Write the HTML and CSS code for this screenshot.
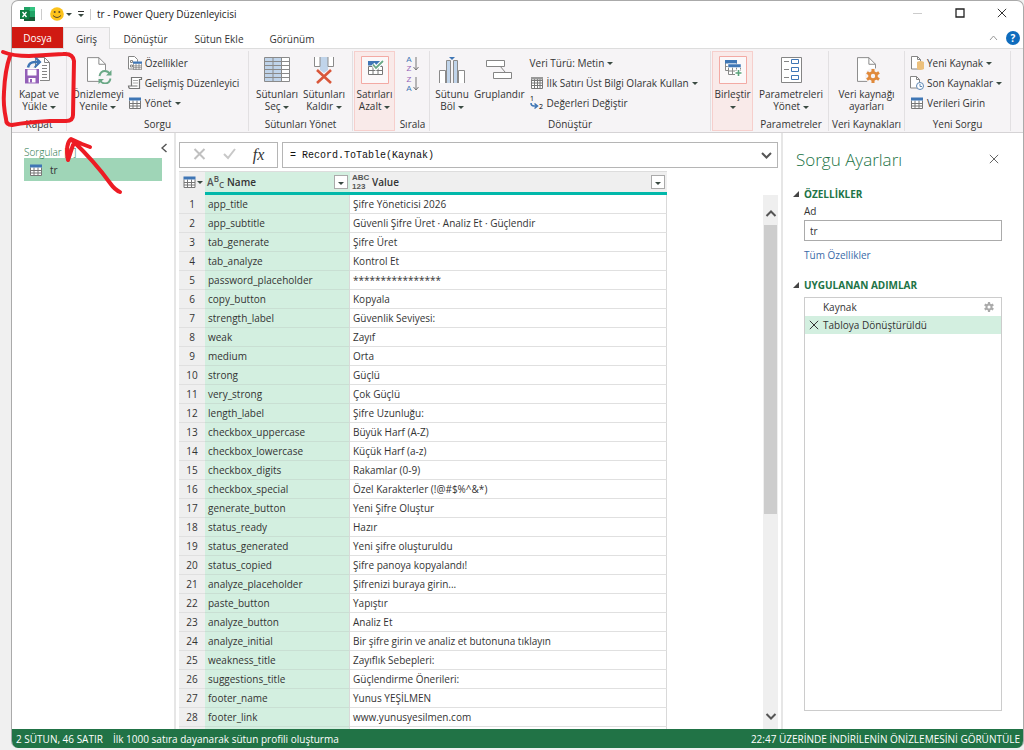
FILE: index.html
```html
<!doctype html>
<html lang="tr">
<head>
    <meta charset="UTF-8">
    <title>tr - Power Query Düzenleyicisi</title>
    <link rel="stylesheet" href="styles.css">
</head>
<body>
<svg class="defs" aria-hidden="true">
    <symbol id="i-table" viewBox="0 0 12 12">
        <path fill="#fff" d="M.5 1h11v10.500H.5z"/>
        <path fill="none" stroke="#777" d="M.5 3.500v8h11v-8M.5 6.500h11M.5 9h11M4 3.500v8M8 3.500v8"/>
        <path fill="#3f76b5" d="M0 .5h12v3H0z"/>
    </symbol>
    <symbol id="i-page" viewBox="0 0 20 26">
        <path fill="#fff" stroke="#858585" d="M.5.5h12l7 7v18H.5z"/>
        <path fill="none" stroke="#858585" d="M12.500.5v7h7"/>
    </symbol>
    <symbol id="i-x" viewBox="0 0 12 12">
        <path fill="none" stroke="currentColor" stroke-width="1.200" d="M1 1l10 10M11 1L1 11"/>
    </symbol>
    <symbol id="i-gear" viewBox="0 0 16 16">
        <path fill="none" stroke="currentColor" stroke-width="3.500" d="M8 0v4M8 12v4M1.100 4l3.400 2M11.500 10l3.400 2M1.100 12l3.400-2M11.500 6l3.400-2"/>
        <circle cx="8" cy="8" r="4" fill="none" stroke="currentColor" stroke-width="3"/>
    </symbol>
</svg>

<div class="window">
    <header class="titlebar">
        <svg class="logo" viewBox="0 0 15 14">
            <path fill="#21a366" d="M4 0h11v14H4z"/>
            <path fill="#107c41" d="M4 4h6v6H4z"/>
            <path fill="#33c481" d="M10 0h5v4h-5z"/>
            <path fill="#185c37" d="M4 10h11v4H4z"/>
            <path fill="#107c41" d="M0 3h9v9H0z"/>
            <path stroke="#fff" stroke-width="1.300" d="M2.500 5l4 5M6.500 5l-4 5"/>
        </svg>
        <span class="bar"></span>
        <button class="quick" aria-label="Geri bildirim">
            <svg width="14" height="14" viewBox="0 0 14 14"><circle cx="7" cy="7" r="6.800" fill="#fcc21b"/><circle cx="4.700" cy="5" r="1" fill="#5b4a2a"/><circle cx="9.300" cy="5" r="1" fill="#5b4a2a"/><path d="M3 8.500q4 4 8 0" fill="none" stroke="#5b4a2a"/></svg>
            <i class="caret"></i>
        </button>
        <button class="quick more" aria-label="Özelleştir"><i class="caret"></i></button>
        <span class="bar"></span>
        <h1>tr - Power Query Düzenleyicisi</h1>
        <div class="winbtns">
            <button aria-label="Simge durumuna küçült"><svg width="10" height="10"><path d="M0 5.500h9" stroke="#ccc"/></svg></button>
            <button aria-label="Ekranı kapla"><svg width="10" height="10"><path d="M1 1h8v8H1z" fill="none" stroke="#222" stroke-width="1.300"/></svg></button>
            <button aria-label="Kapat"><svg width="10" height="10" viewBox="0 0 12 12"><use href="#i-x"/></svg></button>
        </div>
    </header>

    <nav class="tabs">
        <button class="file">Dosya</button>
        <button class="cur">Giriş</button>
        <button class="t-transform">Dönüştür</button>
        <button class="t-add">Sütun Ekle</button>
        <button class="t-view">Görünüm</button>
        <div class="help">
            <svg width="9" height="6"><path d="M1 5l3.500-4L8 5" fill="none" stroke="#999"/></svg>
            <button aria-label="Yardım">?</button>
        </div>
    </nav>

    <div class="ribbon">
        <section class="group g-close">
            <div class="tools">
                <button class="big">
                    <svg viewBox="0 0 28 28">
                        <g fill="none" stroke="#858585"><path fill="#fff" d="M10.500 1.500h9l5 5v18h-14z"/><path d="M19.500 1.500v5h5M17 9.500h5M17 12.500h5M17 15.500h5M17 18.500h5M17 21.500h5"/></g>
                        <path fill="#fff" d="M0 12h15v16H0z"/>
                        <path fill="#9460b8" d="M0 13h14v14.500H0z"/>
                        <path fill="#fff" d="M2.500 13.500h9v6h-9zM3.500 22h7v4.500h-7z"/>
                        <path fill="#9460b8" d="M5 23h2v3.500H5z"/>
                        <path fill="none" stroke="#3f76b5" stroke-width="2.600" d="M3 11.500Q4 6 10 6h4"/>
                        <path fill="#3f76b5" d="M11 .5l5.500 5.500-5.500 5.500H8.500L13 6 8.500.5z"/>
                    </svg>
                    <span>Kapat ve<br>Yükle <i class="caret"></i></span>
                </button>
            </div>
            <h2>Kapat</h2>
        </section>
        <section class="group g-query">
            <div class="tools">
                <button class="big">
                    <svg viewBox="0 0 28 28">
                        <use href="#i-page" x="3" y="1" width="19" height="25"/>
                        <circle cx="21" cy="21" r="7" fill="#f6f4f6"/>
                        <path d="M15.500 20q1-5 5.500-5 3 0 5 3M26.500 22.500q-1 5-5.500 5-3 0-5-3" fill="none" stroke="#6aa886" stroke-width="1.800"/>
                        <path d="M27.500 14v5.500H22zM14.500 28v-5H20z" fill="#6aa886"/>
                    </svg>
                    <span>Önizlemeyi<br>Yenile <i class="caret"></i></span>
                </button>
                <div class="rows">
                    <button><svg viewBox="0 0 14 14"><path d="M.5.5h6l3 3V13h-9z" fill="#fff" stroke="#858585"/><path d="M2.500 4.500h2v2h-2zM2.500 9h2v2h-2z" fill="none" stroke="#858585"/><use href="#i-table" x="5" y="5" width="9" height="9"/></svg>Özellikler</button>
                    <button><svg viewBox="0 0 14 14"><path d="M3.500 10V1.500h10v2h-2v9h-9q-2 0-2-2.500h9" fill="#fff" stroke="#777" stroke-width="1.200"/><path d="M5 4.500h5M5 7h5" stroke="#aaa"/></svg>Gelişmiş Düzenleyici</button>
                    <button><svg viewBox="0 0 14 14"><use href="#i-table" x="1" y="1" width="12" height="12"/></svg>Yönet <i class="caret"></i></button>
                </div>
            </div>
            <h2>Sorgu</h2>
        </section>
        <section class="group g-cols">
            <div class="tools">
                <button class="big">
                    <svg viewBox="0 0 28 28"><path fill="#fff" d="M1.500 1.500h25v24h-25z"/><path fill="#c0d4ea" d="M1.500 1.500h17v24h-17z"/><path fill="none" stroke="#8a8a8a" d="M1.500 1.500h25v24h-25zM10 1.500v24M18.500 1.500v24M1.500 5.500h25M1.500 9.500h25M1.500 13.500h25M1.500 17.500h25M1.500 21.500h25"/></svg>
                    <span>Sütunları<br>Seç <i class="caret"></i></span>
                </button>
                <button class="big">
                    <svg viewBox="0 0 28 28"><path fill="#c0d4ea" d="M10 1h8v13l-4 3-4-3z"/><path fill="#fff" stroke="#8a8a8a" d="M4.500 1v9.500H10V1M23.500 1v9.500H18V1"/><path stroke="#d9573a" stroke-width="2.600" d="M7 14l14 13M21 14L7 27"/></svg>
                    <span>Sütunları<br>Kaldır <i class="caret"></i></span>
                </button>
            </div>
            <h2>Sütunları Yönet</h2>
        </section>
        <section class="group g-boxed">
            <button class="big">
                <svg viewBox="0 0 28 28"><path class="frame" d="M.5.5h27v27H.5z"/><path fill="#fff" stroke="#777" d="M7.500 10.500h14v8h-14zM7.500 14.500h14M12 10.500v8M17 10.500v8"/><path fill="#3f76b5" d="M7 5h14v4.500H7z"/><path fill="none" stroke="#fff" stroke-width="4" d="M12 8l3 4 7-7"/><path fill="none" stroke="#6aa886" stroke-width="1.800" d="M12 8.500l3 3.500 7-7"/></svg>
                <span>Satırları<br>Azalt <i class="caret"></i></span>
            </button>
        </section>
        <section class="group g-sort">
            <div class="tools">
                <button aria-label="Artan sırala"><span class="az"><b>A</b><em>Z</em></span><svg width="6" height="14"><path d="M3 0v13M.5 10L3 13l2.500-3" fill="none" stroke="#777"/></svg></button>
                <button aria-label="Azalan sırala"><span class="az"><em>Z</em><b>A</b></span><svg width="6" height="14"><path d="M3 0v13M.5 10L3 13l2.500-3" fill="none" stroke="#777"/></svg></button>
            </div>
            <h2>Sırala</h2>
        </section>
        <section class="group g-transform">
            <div class="tools">
                <button class="big">
                    <svg viewBox="0 0 28 28"><path fill="#fff" stroke="#8a8a8a" d="M1.500 27V14.500h6V27M20.500 27V14.500h6V27"/><path fill="#c0d4ea" d="M9 4h3v23H9zM16 4h3v23h-3z"/><path fill="none" stroke="#8a8a8a" d="M8.500 27V4.500h4V27M15.500 27V4.500h4V27"/><path fill="#3f76b5" d="M11 1h6l-3 3z"/></svg>
                    <span>Sütunu<br>Böl <i class="caret"></i></span>
                </button>
                <button class="big">
                    <svg viewBox="0 0 28 28"><path fill="none" stroke="#858585" d="M15 10l5 6"/><path fill="#fff" stroke="#858585" d="M1.500 4.500h18v6h-18zM8.500 16.500h18v6h-18z"/></svg>
                    <span>Gruplandır</span>
                </button>
                <div class="rows">
                    <button>Veri Türü: Metin <i class="caret"></i></button>
                    <button><svg viewBox="0 0 14 14"><path fill="#fff" stroke="#777" d="M1.500 1.500h11v11h-11zM1.500 4.500h11M1.500 7h11M1.500 9.500h11M4.500 1.500v11M7.500 1.500v11M10 1.500v11"/><path fill="#999" d="M1 1h12v2.500H1z"/></svg>İlk Satırı Üst Bilgi Olarak Kullan <i class="caret"></i></button>
                    <button><svg viewBox="0 0 14 14"><text x="0" y="5">1</text><text x="9" y="13">2</text><path fill="none" stroke="#3f76b5" stroke-width="1.500" d="M1 7q0 3 3 3h3M4.500 7.500L7.500 10l-3 2.500"/></svg>Değerleri Değiştir</button>
                </div>
            </div>
            <h2>Dönüştür</h2>
        </section>
        <section class="group g-boxed">
            <button class="big">
                <svg viewBox="0 0 28 28"><path class="frame" d="M.5.5h27v27H.5z"/><path fill="#fff" stroke="#888" d="M6.500 5.500h11v9h-11zM6.500 10.500h11"/><path fill="#3f76b5" d="M6 4h12v3.500H6z"/><path fill="#fff" stroke="#888" d="M9.500 9.500h12v9h-12zM9.500 15h12M13.500 11v7.500M17.500 11v7.500"/><path fill="#3f76b5" stroke="#fff" stroke-width=".5" d="M9 8h13v3.500H9z"/><path stroke="#fff" stroke-width="4" d="M19.500 13v8M16 17h7"/><path stroke="#5aa17a" stroke-width="1.600" d="M19.500 14v6M16.500 17h6"/></svg>
                <span>Birleştir<br><i class="caret"></i></span>
            </button>
        </section>
        <section class="group g-params">
            <div class="tools">
                <button class="big">
                    <svg viewBox="0 0 28 28"><path fill="#fff" stroke="#858585" d="M4.500 1.500h20v25h-20z"/><path stroke="#858585" d="M7 5.500h5M7 13.500h5M7 21.500h5"/><path fill="none" stroke="#3f76b5" d="M14.500 3.500h7v4h-7zM14.500 11.500h7v4h-7zM14.500 19.500h7v4h-7z"/></svg>
                    <span>Parametreleri<br>Yönet <i class="caret"></i></span>
                </button>
            </div>
            <h2>Parametreler</h2>
        </section>
        <section class="group g-source">
            <div class="tools">
                <button class="big">
                    <svg viewBox="0 0 28 28"><use href="#i-page" x="4" y="1" width="19" height="25"/><circle cx="20" cy="20" r="8" fill="#f6f4f6"/><use href="#i-gear" x="13" y="13" width="14" height="14" color="#e08a3c"/></svg>
                    <span>Veri kaynağı<br>ayarları</span>
                </button>
            </div>
            <h2>Veri Kaynakları</h2>
        </section>
        <section class="group g-new">
            <div class="tools">
                <div class="rows">
                    <button><svg viewBox="0 0 14 14"><path d="M1.500.5h6l3 3V13h-9z" fill="#fff" stroke="#858585"/><path d="M7.500.5v3h3" fill="none" stroke="#858585"/><path fill="#ecc07c" d="M7 6q3.500-2 7 0v7q-3.500 2-7 0z"/></svg>Yeni Kaynak <i class="caret"></i></button>
                    <button><svg viewBox="0 0 14 14"><path d="M.5.5h6l3 3V12h-9z" fill="#fff" stroke="#858585"/><path d="M6.500.5v3h3" fill="none" stroke="#858585"/><circle cx="10" cy="10" r="3.500" fill="#fff" stroke="#5d87b5"/><path d="M10 8v2.500h2" fill="none" stroke="#5d87b5"/></svg>Son Kaynaklar <i class="caret"></i></button>
                    <button><svg viewBox="0 0 14 14"><use href="#i-table" x="1" y="1" width="12" height="12"/></svg>Verileri Girin</button>
                </div>
            </div>
            <h2>Yeni Sorgu</h2>
        </section>
    </div>

    <main>
        <aside class="queries">
            <div class="head"><h2>Sorgular [1]</h2><button aria-label="Daralt"><svg width="6" height="10"><path d="M5.500 1L1 5l4.500 4" fill="none" stroke="#555" stroke-width="1.500"/></svg></button></div>
            <button class="query"><svg width="12" height="12"><use href="#i-table"/></svg>tr</button>
        </aside>

        <div class="center">
            <div class="formula">
                <div class="actions">
                    <button aria-label="İptal"><svg width="13" height="12" viewBox="0 0 12 12" color="#c0c0c0" stroke-width="2"><path fill="none" stroke="currentColor" d="M1 1l10 10M11 1L1 11"/></svg></button>
                    <button aria-label="Onayla"><svg width="13" height="12"><path d="M1 6l4 4 7-9" fill="none" stroke="#c8c8c8" stroke-width="2"/></svg></button>
                    <button class="fx">fx</button>
                </div>
                <div class="input">
                    <input aria-label="Formül" value="= Record.ToTable(Kaynak)">
                    <button aria-label="Genişlet"><svg width="11" height="7"><path d="M1 1l4.500 4.500L10 1" fill="none" stroke="#555" stroke-width="2"/></svg></button>
                </div>
            </div>
            <div class="data">
                <table>
                    <thead>
                    <tr>
                        <th class="corner"><div><svg width="13" height="12"><use href="#i-table"/></svg><i class="caret"></i></div></th>
                        <th class="name"><div><span class="abc">A<sup>B</sup><sub>C</sub></span>Name<button aria-label="Filtre"><i class="caret"></i></button></div></th>
                        <th class="value"><div><span class="any">ABC<br>123</span>Value<button aria-label="Filtre"><i class="caret"></i></button></div></th>
                    </tr>
                    </thead>
                    <tbody>
                    <tr><th>1</th><td>app_title</td><td>Şifre Yöneticisi 2026</td></tr>
                    <tr><th>2</th><td>app_subtitle</td><td>Güvenli Şifre Üret · Analiz Et · Güçlendir</td></tr>
                    <tr><th>3</th><td>tab_generate</td><td>Şifre Üret</td></tr>
                    <tr><th>4</th><td>tab_analyze</td><td>Kontrol Et</td></tr>
                    <tr><th>5</th><td>password_placeholder</td><td>****************</td></tr>
                    <tr><th>6</th><td>copy_button</td><td>Kopyala</td></tr>
                    <tr><th>7</th><td>strength_label</td><td>Güvenlik Seviyesi:</td></tr>
                    <tr><th>8</th><td>weak</td><td>Zayıf</td></tr>
                    <tr><th>9</th><td>medium</td><td>Orta</td></tr>
                    <tr><th>10</th><td>strong</td><td>Güçlü</td></tr>
                    <tr><th>11</th><td>very_strong</td><td>Çok Güçlü</td></tr>
                    <tr><th>12</th><td>length_label</td><td>Şifre Uzunluğu:</td></tr>
                    <tr><th>13</th><td>checkbox_uppercase</td><td>Büyük Harf (A-Z)</td></tr>
                    <tr><th>14</th><td>checkbox_lowercase</td><td>Küçük Harf (a-z)</td></tr>
                    <tr><th>15</th><td>checkbox_digits</td><td>Rakamlar (0-9)</td></tr>
                    <tr><th>16</th><td>checkbox_special</td><td>Özel Karakterler (!@#$%^&amp;*)</td></tr>
                    <tr><th>17</th><td>generate_button</td><td>Yeni Şifre Oluştur</td></tr>
                    <tr><th>18</th><td>status_ready</td><td>Hazır</td></tr>
                    <tr><th>19</th><td>status_generated</td><td>Yeni şifre oluşturuldu</td></tr>
                    <tr><th>20</th><td>status_copied</td><td>Şifre panoya kopyalandı!</td></tr>
                    <tr><th>21</th><td>analyze_placeholder</td><td>Şifrenizi buraya girin...</td></tr>
                    <tr><th>22</th><td>paste_button</td><td>Yapıştır</td></tr>
                    <tr><th>23</th><td>analyze_button</td><td>Analiz Et</td></tr>
                    <tr><th>24</th><td>analyze_initial</td><td>Bir şifre girin ve analiz et butonuna tıklayın</td></tr>
                    <tr><th>25</th><td>weakness_title</td><td>Zayıflık Sebepleri:</td></tr>
                    <tr><th>26</th><td>suggestions_title</td><td>Güçlendirme Önerileri:</td></tr>
                    <tr><th>27</th><td>footer_name</td><td>Yunus YEŞİLMEN</td></tr>
                    <tr><th>28</th><td>footer_link</td><td>www.yunusyesilmen.com</td></tr>
                    <tr><th></th><td></td><td></td></tr>
                    </tbody>
                </table>
                <div class="scroll">
                    <button aria-label="Yukarı"><svg width="12" height="8"><path d="M1.500 7L6 2.500 10.500 7" fill="none" stroke="#555" stroke-width="2"/></svg></button>
                    <div class="track"><div class="thumb"></div></div>
                    <button aria-label="Aşağı"><svg width="12" height="8"><path d="M1.500 1L6 5.500 10.500 1" fill="none" stroke="#555" stroke-width="2"/></svg></button>
                </div>
            </div>
        </div>

        <aside class="settings">
            <div class="head"><h2>Sorgu Ayarları</h2><button aria-label="Bölmeyi kapat"><svg width="10" height="10"><use href="#i-x"/></svg></button></div>
            <h3>ÖZELLİKLER</h3>
            <div class="props">
                <label for="qname">Ad</label>
                <input id="qname" value="tr">
                <a href="#">Tüm Özellikler</a>
            </div>
            <h3>UYGULANAN ADIMLAR</h3>
            <ul class="steps">
                <li>Kaynak<svg class="gear" width="10" height="10"><use href="#i-gear"/></svg></li>
                <li class="cur"><svg width="10" height="10"><use href="#i-x"/></svg>Tabloya Dönüştürüldü</li>
            </ul>
        </aside>
    </main>

    <footer>
        <span>2 SÜTUN, 46 SATIR</span>
        <span>İlk 1000 satıra dayanarak sütun profili oluşturma</span>
        <span class="right">22:47 ÜZERİNDE İNDİRİLENİN ÖNİZLEMESİNİ GÖRÜNTÜLE</span>
    </footer>
</div>

<svg class="marker" width="130" height="200" viewBox="0 0 130 200" aria-hidden="true">
    <path d="M3 52q10 4 26 4l34-2q10-1 11 7l-1 54q0 6-7 6H50q-22 1-38 4-6 0-6-6Q3 105 4 92q1-22 6-36"/>
    <path d="M120 192q-5-2-10-9Q95 162 72 140M68 160q-3-16 3-21l11 5 8 3M68 160l5-15"/>
</svg>
</body>
</html>
```
FILE: styles.css
```css
*{
    margin: 0;
    padding: 0;
    box-sizing: border-box;
    list-style: none;
}
body{
    height: 100vh;
    padding: 0 0 2px 11px;
    overflow: hidden;
    background: #f0f0f0;
    font: 10px/12px "Open Sans", "Noto Sans", sans-serif;
    color: #333;
}
button, input{
    font: inherit;
    color: inherit;
    background: none;
    border: 0;
    white-space: nowrap;
}
h1, h2, h3{
    font-size: inherit;
    font-weight: normal;
}
.defs{
    position: absolute;
    width: 0;
    height: 0;
}
.window{
    height: 100%;
    display: flex;
    flex-direction: column;
    background: #fff;
    border: 1px solid #aaa;
    border-bottom: 0;
    border-radius: 7px;
    overflow: hidden;
}
.caret{
    display: inline-block;
    vertical-align: middle;
    border: 3px solid transparent;
    border-top-color: #3a4a42;
    border-bottom: 0;
}

/* title bar */
.titlebar{
    height: 26px;
    flex: none;
    display: flex;
    align-items: center;
    padding-left: 8px;
}
.titlebar h1{
    color: #222;
}
.logo{
    width: 15px;
    height: 14px;
}
.bar{
    width: 1px;
    height: 11px;
    margin: 0 6px;
    background: #ccc;
}
.quick{
    display: flex;
    align-items: center;
    gap: 2px;
    margin-left: 2px;
}
.quick.more{
    margin-left: 6px;
    padding-top: 2px;
    border-top: 1px solid #333;
}
.winbtns{
    margin-left: auto;
    display: flex;
}
.winbtns button{
    width: 42px;
    height: 26px;
}

/* ribbon tabs */
.tabs{
    height: 22px;
    flex: none;
    display: flex;
    border-bottom: 1px solid #ddd;
}
.tabs button{
    width: 76px;
    height: 22px;
    padding-top: 1px;
}
.tabs .file{
    width: 51px;
    height: 21px;
    color: #fff;
    background: #d01a12;
}
.tabs .cur{
    width: 47px;
    background: #f6f4f6;
    border: 1px solid #ddd;
    border-bottom: 0;
}
.tabs .t-transform{
    width: 71px;
}
.tabs .t-view{
    width: 70px;
}
.help{
    margin-left: auto;
    padding-right: 3px;
    display: flex;
    align-items: center;
    gap: 8px;
}
.tabs .help button{
    width: 14px;
    height: 14px;
    padding: 0;
    border-radius: 50%;
    background: #0f6cbd;
    color: #fff;
    font-weight: bold;
}

/* ribbon */
.ribbon{
    height: 84px;
    flex: none;
    display: flex;
    padding: 2px 0 1px;
    background: #f6f4f6;
    border-bottom: 1px solid #d5d3d5;
    overflow: hidden;
}
.group{
    flex: none;
    display: flex;
    flex-direction: column;
    border-right: 1px solid #e2e0e2;
}
.group h2{
    height: 13px;
    margin-top: auto;
    text-align: center;
    white-space: nowrap;
}
.tools{
    display: flex;
    justify-content: center;
}
.big{
    padding-top: 5px;
    display: flex;
    flex-direction: column;
    align-items: center;
    min-width: 47px;
}
.big svg{
    width: 28px;
    height: 28px;
    margin-bottom: 4px;
}
.rows{
    display: flex;
    flex-direction: column;
    align-items: flex-start;
    padding-top: 2px;
}
.rows button{
    height: 20px;
    display: flex;
    align-items: center;
    gap: 3px;
}
.rows svg{
    width: 14px;
    height: 14px;
    overflow: visible;
}
.rows text{
    font-size: 7px;
}
.g-close{
    width: 55px;
}
.g-query{
    width: 182px;
}
.g-query .tools{
    justify-content: flex-start;
    gap: 4px;
    padding-left: 5px;
}
.g-cols{
    width: 104px;
}
.g-boxed{
    width: 41px;
    margin: 0 1px;
    align-items: center;
    background: #f9eae9;
    border: 1px solid #f6cfcc;
}
.g-boxed .big{
    padding-top: 4px;
}
.frame{
    fill: #fbf8f9;
    stroke: #f3aaa4;
}
.g-sort{
    width: 34px;
}
.g-sort .tools{
    flex-direction: column;
    align-items: center;
    gap: 2px;
    padding-top: 4px;
}
.g-sort button{
    display: flex;
    align-items: center;
    gap: 1px;
}
.az{
    font: 8px/9px "Liberation Sans", sans-serif;
}
.az b, .az em{
    display: block;
    font-style: normal;
    font-weight: normal;
    color: #3f76b5;
}
.az em{
    color: #9460b8;
}
.g-transform{
    width: 281px;
}
.g-transform .tools{
    justify-content: flex-start;
}
.g-transform .big{
    min-width: 44px;
}
.g-transform .rows{
    padding-left: 5px;
}
.g-params{
    width: 75px;
}
.g-source{
    width: 76px;
}
.g-new{
    width: 106px;
}
.g-new .tools{
    justify-content: flex-start;
    padding-left: 5px;
}

/* body */
main{
    flex: 1;
    min-height: 0;
    display: flex;
}
.queries{
    width: 164px;
    border-right: 2px solid #e6e6e6;
    padding: 10px 12px 0 12px;
}
.queries .head{
    display: flex;
    justify-content: space-between;
    height: 15px;
}
.queries .head h2{
    padding-top: 3px;
    font-weight: 300;
    color: #217346;
}
.queries .head button{
    height: 12px;
    margin-right: -5px;
}
.query{
    width: 100%;
    height: 23px;
    padding-left: 6px;
    display: flex;
    align-items: center;
    gap: 8px;
    background: #9fd5b7;
}
.center{
    flex: 1;
    min-width: 0;
    display: flex;
    flex-direction: column;
    padding: 9px 3px 0 3px;
}
.formula{
    display: flex;
    gap: 4px;
    height: 26px;
    margin-bottom: 3px;
}
.actions, .input{
    display: flex;
    align-items: center;
    border: 1px solid #b5b5b5;
}
.actions{
    width: 99px;
    justify-content: space-around;
    padding: 0 4px;
}
.fx{
    font: italic 16px/16px "Liberation Serif", serif;
}
.input{
    flex: 1;
    padding: 0 5px 0 7px;
}
.input input{
    flex: 1;
    min-width: 0;
    font: 10px "Liberation Mono", monospace;
    color: #111;
}
.input svg{
    display: block;
}
.data{
    flex: 1;
    min-height: 0;
    display: flex;
    justify-content: space-between;
    align-items: flex-start;
    overflow: hidden;
}
table{
    border-collapse: separate;
    border-spacing: 0;
    table-layout: fixed;
    width: 488px;
}
thead th{
    height: 24px;
    background: #efefef;
    border-top: 1px solid #ddd;
    border-bottom: 3px solid #01b8aa;
    font-weight: 600;
    text-align: left;
}
thead div{
    display: flex;
    align-items: center;
    padding: 0 2px;
}
thead th.corner{
    width: 26px;
    border-bottom-color: #efefef;
}
.corner div{
    padding-left: 4px;
    gap: 1px;
}
thead th.name{
    width: 145px;
    background: #d3efe0;
}
.abc, .any{
    width: 20px;
    flex: none;
    font-weight: 600;
    color: #555;
}
.abc{
    display: flex;
    align-items: center;
}
.abc sup, .abc sub{
    font-size: 8px;
    line-height: 8px;
}
.abc sup{
    padding-bottom: 6px;
}
.abc sub{
    padding-top: 6px;
}
.any{
    font: bold 8px/9px "Liberation Sans", sans-serif;
}
thead button{
    width: 14px;
    height: 14px;
    margin-left: auto;
    line-height: 8px;
    background: #fff;
    border: 1px solid #aaa;
}
tbody th, tbody td{
    height: 19px;
    border-bottom: 1px solid #e0e0e0;
    white-space: nowrap;
}
tbody th{
    background: #efefef;
    font-weight: normal;
}
tbody td{
    padding-left: 3px;
    border-right: 1px solid #d9d9d9;
}
tbody td:nth-child(2){
    background: #d3efe0;
    border-bottom-color: #c9dfd3;
}
.scroll{
    width: 15px;
    align-self: stretch;
    margin-top: 24px;
    display: flex;
    flex-direction: column;
    background: #efefef;
}
.scroll button{
    height: 30px;
    padding-top: 6px;
    flex: none;
}
.scroll .track{
    flex: 1;
    padding: 0 1px;
}
.scroll .thumb{
    height: 61%;
    background: #cdcdcd;
}
.settings{
    width: 242px;
    border-left: 2px solid #e6e6e6;
    padding: 15px 21px 18px 10px;
    display: flex;
    flex-direction: column;
}
.settings .head{
    display: flex;
    justify-content: space-between;
    align-items: center;
    padding: 0 3px;
    height: 24px;
    color: #666;
}
.settings .head h2{
    font-size: 17px;
    font-weight: 300;
    color: #217346;
}
.settings h3{
    display: flex;
    align-items: center;
    gap: 5px;
    margin-top: 16px;
    font-weight: bold;
    color: #217346;
}
.settings h3::before{
    content: "";
    border: 3px solid #444;
    border-top-color: transparent;
    border-left-color: transparent;
}
.props{
    display: flex;
    flex-direction: column;
    align-items: flex-start;
    padding: 5px 0 2px 11px;
}
.props input{
    width: 100%;
    height: 21px;
    margin: 3px 0 8px;
    padding: 0 5px;
    border: 1px solid #ababab;
}
.props a{
    color: #3b6aa8;
    text-decoration: none;
}
.steps{
    flex: 1;
    margin: 6px 0 0 11px;
    border: 1px solid #ccc;
}
.steps li{
    height: 18px;
    display: flex;
    align-items: center;
    gap: 4px;
    padding: 0 7px 0 18px;
}
.steps li.cur{
    padding-left: 4px;
    background: #d3efe0;
}
.gear{
    margin-left: auto;
    color: #aaa;
}

/* status bar */
footer{
    height: 19px;
    flex: none;
    display: flex;
    align-items: center;
    gap: 10px;
    padding: 0 3px 0 4px;
    background: #217346;
    color: #fff;
}
footer .right{
    margin-left: auto;
}

/* red pen drawn over the window */
.marker{
    position: absolute;
    left: 0;
    top: 0;
    fill: none;
    stroke: #ed1c24;
    stroke-width: 4;
    stroke-linecap: round;
    stroke-linejoin: round;
    pointer-events: none;
}
```
